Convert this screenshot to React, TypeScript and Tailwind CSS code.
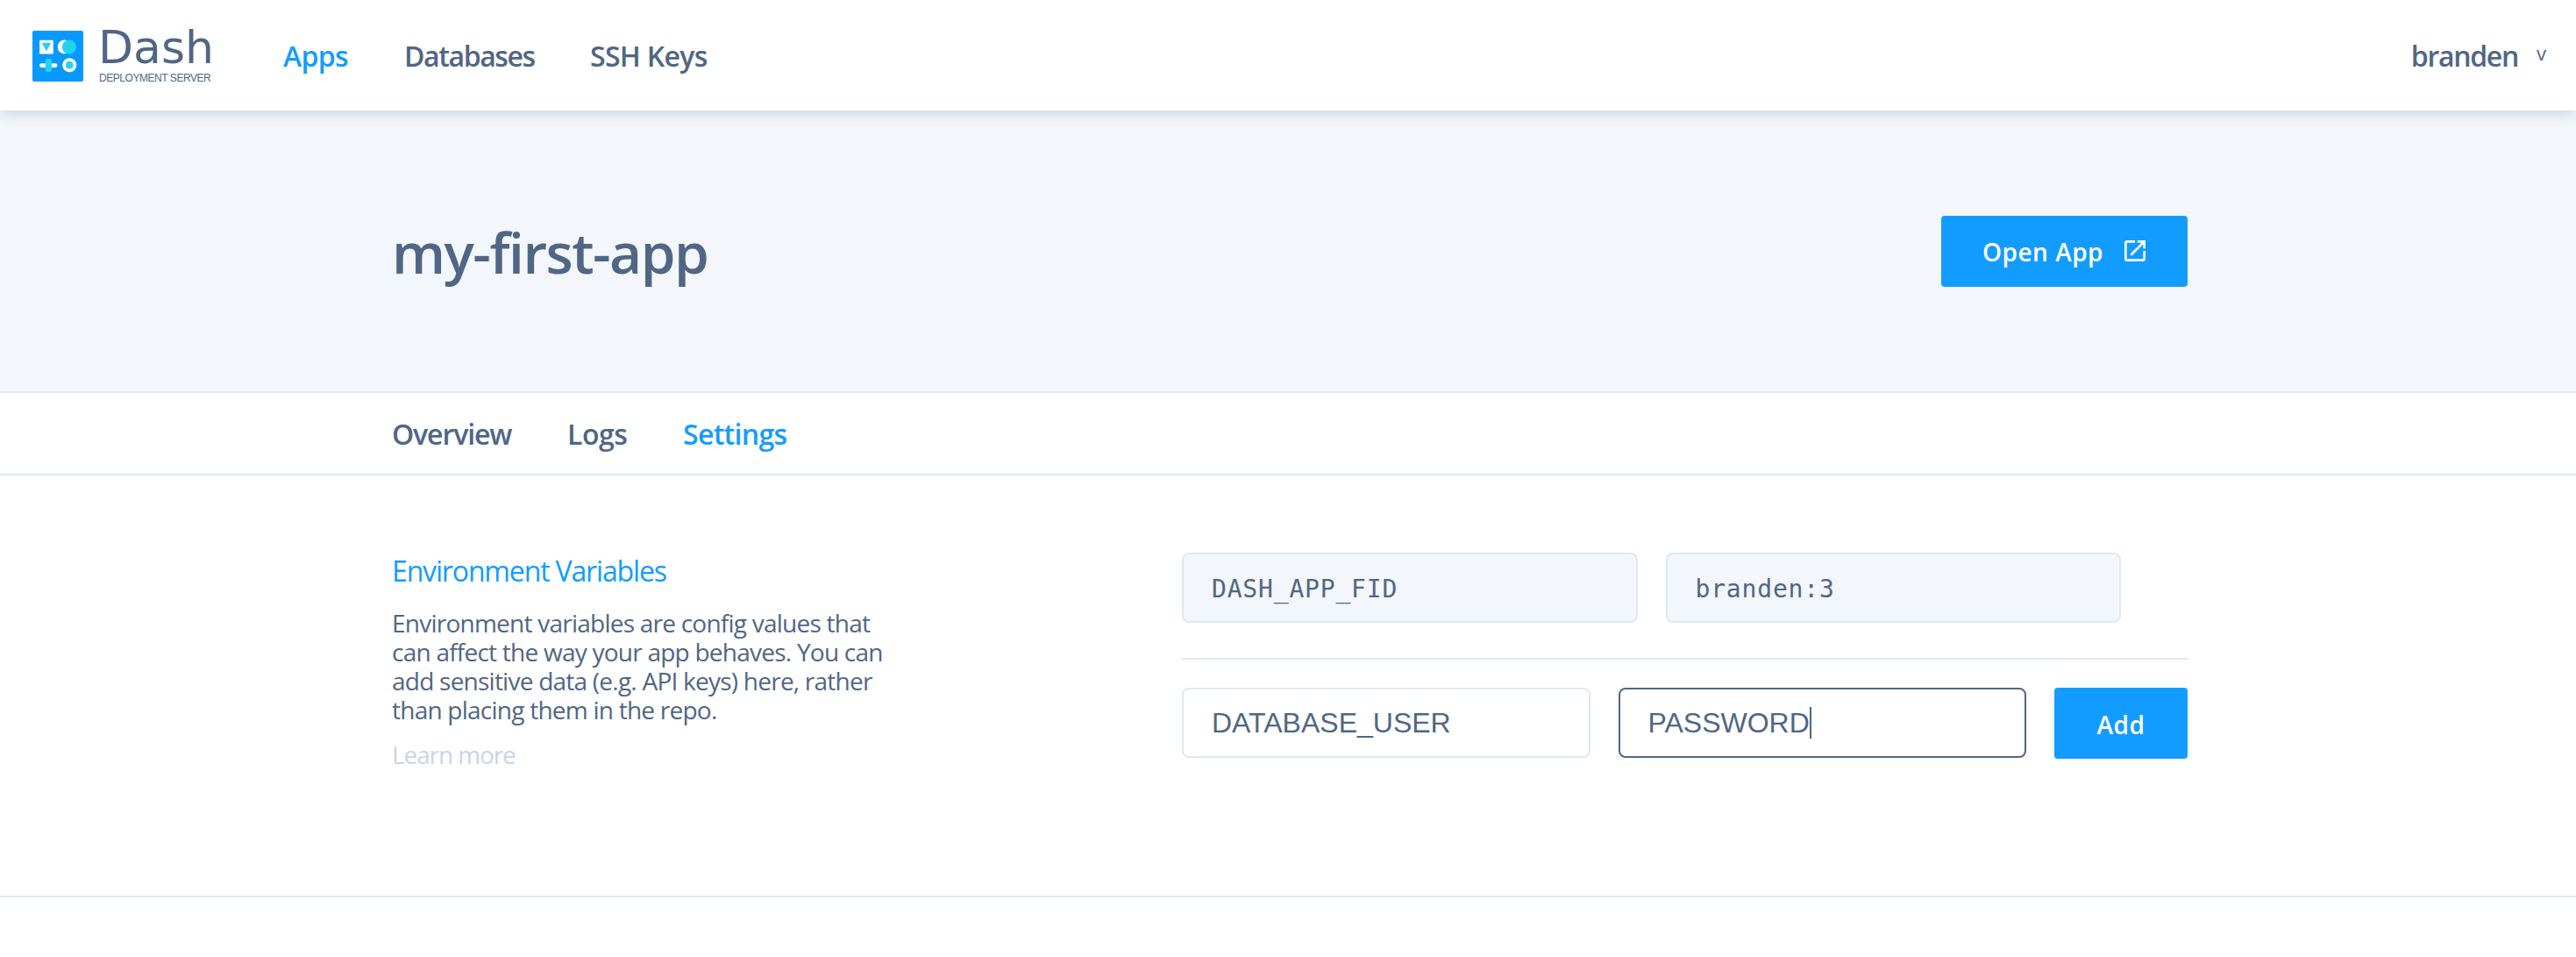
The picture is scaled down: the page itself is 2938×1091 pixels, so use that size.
import React from "react";
import { MdOpenInNew } from "react-icons/md";

function LogoMark() {
  return (
    <svg className="mt-[2px] h-[58px] w-[58px] shrink-0" viewBox="0 0 173 173">
      <rect width="173" height="173" rx="6" fill="#0899ff" />
      <rect x="24" y="32" width="47" height="47" rx="3" fill="#fff" />
      <path d="M32 42h31L47.500 70z" fill="#22d3f0" />
      <circle cx="109" cy="55" r="23.500" fill="#fff" />
      <circle cx="125" cy="55" r="24" fill="#22d3f0" />
      <rect x="24" y="111" width="61" height="14" rx="7" fill="#fff" />
      <rect x="44" y="95" width="22" height="46" rx="11" fill="#22d3f0" />
      <circle cx="126" cy="117" r="24" fill="#fff" />
      <circle cx="126" cy="117" r="13" fill="#22d3f0" />
    </svg>
  );
}

function Header() {
  return (
    <header className="relative z-10 flex h-[126px] items-center bg-white pr-[34px] pl-[37px] text-[32px] font-semibold shadow-[0_4px_14px_-1px_rgba(80,102,150,0.26)]">
      <LogoMark />
      <div className="ml-[14px] flex w-[214px] flex-col pt-[4px]">
        <span className="ml-[3px] h-[48px] font-['DejaVu_Sans',sans-serif] text-[52px] leading-[46px] font-normal">Dash</span>
        <span className="ml-[4px] h-[20px] font-['Liberation_Sans',sans-serif] text-[12px] leading-[20px] font-normal tracking-[-0.45px]">DEPLOYMENT SERVER</span>
      </div>
      <nav className="flex flex-1 pt-[1px]">
        <a className="w-[138px] tracking-[-0.7px] text-[#139cff]">Apps</a>
        <a className="w-[212px] tracking-[-1.4px]">Databases</a>
        <a className="tracking-[-0.7px]">SSH Keys</a>
      </nav>
      <div className="flex items-center pt-[1px]">
        <span className="tracking-[-1.3px]">branden</span>
        <span className="mb-[6px] ml-[21px] text-[22px] font-normal">v</span>
      </div>
    </header>
  );
}

function Hero() {
  return (
    <section className="h-[322px] border-b-2 border-[#dfe8f3] bg-[#f3f6fb]">
      <div className="ml-[447px] flex h-full w-[2048px] items-center justify-between">
        <h1 className="pt-[3px] text-[64px] font-semibold tracking-[-1.5px]">my-first-app</h1>
        <button className="flex h-[81px] w-[281px] items-center rounded-[4px] bg-[#139cff] pl-[47px] text-[28px] font-semibold text-white">
          <span className="w-[158px] pt-[2px] text-left tracking-[0.5px]">Open App</span>
          <MdOpenInNew className="h-[32px] w-[32px]" />
        </button>
      </div>
    </section>
  );
}

function Tabs() {
  return (
    <nav className="h-[94px] border-b-2 border-[#dfe8f3]">
      <div className="ml-[447px] flex h-full w-[2048px] items-center pt-[2px] text-[32px] font-semibold">
        <a className="w-[200px] tracking-[-1.1px]">Overview</a>
        <a className="w-[132px] tracking-[-0.5px]">Logs</a>
        <a className="tracking-[-0.7px] text-[#139cff]">Settings</a>
      </div>
    </nav>
  );
}

function Variables() {
  return (
    <section className="h-[481px] border-b-2 border-[#dfe8f3]">
      <div className="ml-[447px] flex w-[2048px] justify-between pt-[88px]">
        <div className="text-[28px] leading-[33px]">
          <h2 className="mt-[-1px] text-[32px] leading-[44px] tracking-[-1.15px] text-[#139cff]">Environment Variables</h2>
          <p className="mt-[21px] tracking-[-0.76px] whitespace-nowrap">
            Environment variables are config values that
            <br />
            can affect the way your app behaves. You can
            <br />
            add sensitive data (e.g. API keys) here, rather
            <br />
            than placing them in the repo.
          </p>
          <a className="mt-[18px] block tracking-[-1.1px] text-[#c8d5e6]">Learn more</a>
        </div>
        <div className="w-[1147px]">
          <div className="flex gap-[32px] pr-[76px] font-['DejaVu_Sans_Mono',monospace] text-[28px] tracking-[0.82px]">
            <div className="flex h-[80px] flex-1 items-center rounded-[8px] border-2 border-[#dfe8f3] bg-[#f3f6fb] pt-[3px] pl-[32px]">DASH_APP_FID</div>
            <div className="flex h-[80px] flex-1 items-center rounded-[8px] border-2 border-[#dfe8f3] bg-[#f3f6fb] pt-[3px] pl-[32px]">branden:3</div>
          </div>
          <div className="mt-[40px] h-[2px] bg-[#dfe8f3]" />
          <div className="mt-[32px] flex gap-[32px] font-['Liberation_Sans',sans-serif] text-[32px]">
            <div className="flex h-[80px] flex-1 items-center rounded-[8px] border-2 border-[#dfe8f3] pl-[32px]">DATABASE_USER</div>
            <div className="flex h-[80px] flex-1 items-center rounded-[8px] border-2 border-[#506685] pl-[32px]">
              PASSWORD
              <span className="h-[36px] w-[2px] bg-[#506685]" />
            </div>
            <button className="h-[81px] w-[152px] rounded-[4px] bg-[#139cff] pt-[2px] font-['Open_Sans',sans-serif] text-[28px] font-semibold tracking-[0.5px] text-white">Add</button>
          </div>
        </div>
      </div>
    </section>
  );
}

export default function App() {
  return (
    <div className="h-[1091px] w-full overflow-hidden bg-white font-['Open_Sans',sans-serif] text-[#506685]">
      <Header />
      <Hero />
      <Tabs />
      <Variables />
    </div>
  );
}
